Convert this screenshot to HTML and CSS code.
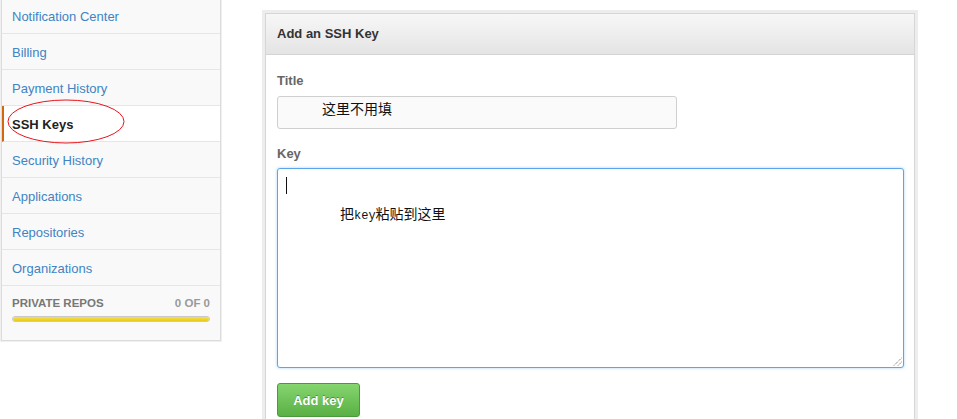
FILE: index.html
```html
<!DOCTYPE html>
<html lang="zh-CN">
<head>
<meta charset="utf-8">
<title>SSH Keys</title>
<link rel="stylesheet" href="styles.css">
</head>
<body>
<div class="page">
  <nav class="menu">
    <a class="menu-item" href="#">Notification Center</a>
    <a class="menu-item" href="#">Billing</a>
    <a class="menu-item" href="#">Payment History</a>
    <a class="menu-item selected" href="#">SSH Keys</a>
    <a class="menu-item" href="#">Security History</a>
    <a class="menu-item" href="#">Applications</a>
    <a class="menu-item" href="#">Repositories</a>
    <a class="menu-item" href="#">Organizations</a>
    <div class="repos">
      <div class="repos-head"><span>PRIVATE REPOS</span><span class="repos-count">0 OF 0</span></div>
      <div class="repos-bar"><div class="repos-fill"></div></div>
    </div>
    <svg class="annotation" width="120" height="46" viewBox="0 0 120 46"><ellipse cx="60" cy="22.5" rx="58" ry="21.5" fill="none" stroke="#e8141b" stroke-width="1"/></svg>
  </nav>

  <section class="panel">
    <div class="panel-head">Add an SSH Key</div>
    <div class="panel-body">
      <div class="label">Title</div>
      <div class="field">这里不用填</div>
      <div class="label label-key">Key</div>
      <div class="area">
        <div class="caret"></div>
        <div class="area-text">把<span class="mono">key</span>粘贴到这里</div>
        <svg class="grip" width="9" height="9" viewBox="0 0 9 9"><path d="M1 8.5 L8.5 1 M5 8.5 L8.5 5" stroke="#555" stroke-width="1" stroke-dasharray="1 1" fill="none"/></svg>
      </div>
      <button class="btn">Add key</button>
    </div>
  </section>
</div>
</body>
</html>
```

FILE: styles.css
```css
html, body {
  margin: 0;
  padding: 0;
  background: #fff;
  overflow: hidden;
}
body {
  font-family: "Liberation Sans", Arial, "Noto Sans CJK SC", sans-serif;
  font-size: 13px;
  color: #333;
}
.page {
  display: flex;
  align-items: flex-start;
}
.menu {
  position: relative;
  margin: -3px 0 0 1px;
  width: 220px;
  box-sizing: border-box;
  border: 1px solid #dcdcdc;
  box-shadow: 0 0 0 1px #f0f0f0;
  background: #f9f9f9;
  display: flex;
  flex-direction: column;
}
.menu-item {
  display: block;
  height: 33px;
  line-height: 33px;
  padding: 2px 0 0 10px;
  border-bottom: 1px solid #e6e6e6;
  color: #4183c4;
  text-decoration: none;
  font-size: 13px;
}
.menu-item.selected {
  background: #fff;
  color: #222;
  font-weight: bold;
  border-left: 2px solid #d26911;
  padding-left: 8px;
}
.repos {
  padding: 10px 10px 18px 10px;
}
.repos-head {
  display: flex;
  justify-content: space-between;
  font-size: 11.5px;
  font-weight: bold;
  color: #777;
  line-height: 14px;
}
.repos-count {
  color: #999;
  font-weight: bold;
}
.repos-bar {
  margin-top: 6px;
  height: 6px;
  box-sizing: border-box;
  border: 1px solid #c9c9c9;
  border-radius: 3px;
  background: #eee;
  overflow: hidden;
}
.repos-fill {
  height: 100%;
  width: 100%;
  background: linear-gradient(#f7e04a, #e9c91c);
}
.annotation {
  position: absolute;
  left: 4px;
  top: 101px;
}
.panel {
  margin: 13px 0 0 44px;
  width: 650px;
  box-sizing: border-box;
  border: 1px solid #d6d6d6;
  box-shadow: 0 0 0 3px #ededed;
  background: #fff;
}
.panel-head {
  height: 40px;
  line-height: 40px;
  padding-left: 11px;
  font-weight: bold;
  font-size: 13px;
  color: #333;
  background: linear-gradient(#f7f7f7, #e4e4e4);
  border-bottom: 1px solid #d4d4d4;
}
.panel-body {
  padding: 17px 10px 30px 11px;
  display: flex;
  flex-direction: column;
  align-items: flex-start;
}
.label {
  font-weight: bold;
  color: #666;
  line-height: 18px;
  margin-bottom: 6px;
}
.label-key {
  margin-top: 16px;
  margin-bottom: 5px;
}
.field {
  width: 400px;
  height: 33px;
  box-sizing: border-box;
  border: 1px solid #cfcfcf;
  border-radius: 3px;
  background: #fafafa;
  padding: 2px 0 0 44px;
  font-family: "Noto Sans CJK SC", sans-serif;
  font-size: 14px;
  line-height: 18px;
  color: #111;
}
.area {
  position: relative;
  width: 627px;
  height: 200px;
  box-sizing: border-box;
  border: 1px solid #5ba6ea;
  border-radius: 3px;
  box-shadow: 0 0 3px rgba(81, 167, 232, 0.5);
  background: #fff;
  padding: 8px 8px;
}
.caret {
  width: 1px;
  height: 17px;
  background: #111;
}
.area-text {
  margin: 10px 0 0 54px;
  font-family: "Noto Sans CJK SC", sans-serif;
  font-size: 14px;
  line-height: 18px;
  color: #111;
}
.mono {
  font-family: "Liberation Mono", monospace;
  font-size: 12px;
}
.grip {
  position: absolute;
  right: 1px;
  bottom: 1px;
}
.btn {
  margin-top: 15px;
  width: 83px;
  height: 34px;
  border: 1px solid #4a9a3c;
  border-radius: 3px;
  background: linear-gradient(#86d56f, #59b044);
  color: #fff;
  font-family: "Liberation Sans", Arial, sans-serif;
  font-weight: bold;
  font-size: 13px;
  text-shadow: 0 -1px 0 rgba(0, 0, 0, 0.3);
  padding: 0;
}
```
